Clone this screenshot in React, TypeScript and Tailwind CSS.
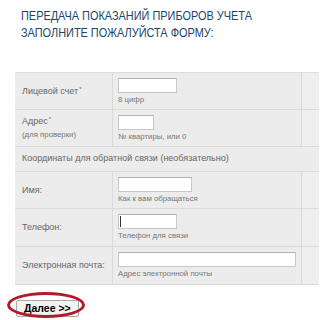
import React from "react"

const font = { fontFamily: '"Liberation Sans", Arial, sans-serif' }

type FieldRow = {
    label: string
    star?: boolean
    sub?: string
    inputW: string
    hint: string
    caret?: boolean
    h: string
}

const topRows: FieldRow[] = [
    { label: "Лицевой счет", star: true, inputW: "w-[59px]", hint: "8 цифр", h: "h-[37px]" },
    { label: "Адрес", star: true, sub: "(для проверки)", inputW: "w-[36px]", hint: "№ квартиры, или 0", h: "h-[37px]" },
]

const contactRows: FieldRow[] = [
    { label: "Имя:", inputW: "w-[74px]", hint: "Как к вам обращаться", h: "h-[37px]" },
    { label: "Телефон:", inputW: "w-[59px]", hint: "Телефон для связи", caret: true, h: "h-[38px]" },
    { label: "Электронная почта:", inputW: "w-[178px]", hint: "Адрес электронной почты", h: "h-[38px]" },
]

const Row = ({ row }: { row: FieldRow }) => (
    <div className={`grid grid-cols-[98px_189px_17px] ${row.h} border-b border-[#dadada]`}>
        <div className="flex flex-col justify-center pl-[7px] border-r border-[#dadada]">
            <span className="text-[9px] leading-[11px] text-[#666]">
                {row.label}
                {row.star && <sup className="text-[6px] ml-px">*</sup>}
            </span>
            {row.sub && <span className="text-[7.8px] leading-[10px] text-[#777] mt-[3px]">{row.sub}</span>}
        </div>
        <div className="flex flex-col pl-[5px] pt-[5px] border-r border-[#dadada]">
            <div className={`${row.inputW} h-[15px] bg-white border border-[#c8c8c8] border-t-[#b0b0b0] flex items-center`}>
                {row.caret && <span className="w-px h-[11px] bg-[#333] ml-px" />}
            </div>
            <span className="text-[7.8px] leading-[10px] text-[#777] mt-[2px]">{row.hint}</span>
        </div>
        <div className="bg-[#efefef]" />
    </div>
)

export default function App() {
    return (
        <div className="w-[336px] h-[320px] bg-white overflow-hidden" style={font}>
            <div className="pl-[21px] pt-[7px] text-[13px] leading-[17px] text-[#22456c] uppercase">
                <div className="scale-x-[0.84] origin-left whitespace-nowrap">Передача показаний приборов учета</div>
                <div className="scale-x-[0.84] origin-left whitespace-nowrap">Заполните пожалуйста форму:</div>
            </div>

            <div className="ml-[15px] mt-[31px] w-[304px] bg-[#ececec] border-t border-[#dcdcdc]">
                {topRows.map((r) => <Row key={r.label} row={r} />)}
                <div className="h-[25px] flex items-center pl-[7px] border-b border-[#dadada]">
                    <span className="text-[9px] text-[#666]">Координаты для обратной связи (необязательно)</span>
                </div>
                {contactRows.map((r) => <Row key={r.label} row={r} />)}
            </div>

            <div className="relative ml-[16px] mt-[10px] w-fit">
                <button className="h-[17px] px-[7px] bg-[#f3f3f3] border border-[#a9a9a9] rounded-[2px] text-[10.5px] font-bold text-black leading-none">
                    Далее &gt;&gt;
                </button>
                <span className="absolute left-[-9px] top-[-3px] w-[78px] h-[26px] rounded-[50%] border-[3px] border-[#b3192b] pointer-events-none" />
            </div>
        </div>
    )
}
